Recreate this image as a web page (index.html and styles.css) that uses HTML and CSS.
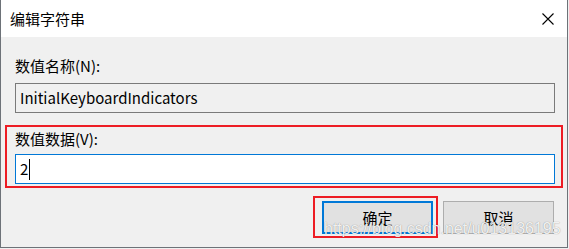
FILE: index.html
```html
<!DOCTYPE html>
<html lang="zh-CN">
<head>
    <meta charset="UTF-8">
    <meta name="viewport" content="width=device-width, initial-scale=1.0">
    <title>编辑字符串</title>
    <link rel="stylesheet" href="styles.css">
</head>
<body>
    <div class="dialog">
        <div class="titlebar">
            <span class="title">编辑字符串</span>
            <svg class="close" width="12" height="12" viewBox="0 0 12 12">
                <path d="M0.5 0.5 L11.5 11.5 M11.5 0.5 L0.5 11.5" stroke="#000" stroke-width="1.1" fill="none"/>
            </svg>
        </div>

        <div class="content">
            <div class="group">
                <div class="label">数值名称(N):</div>
                <div class="field readonly">InitialKeyboardIndicators</div>
            </div>

            <div class="group marked">
                <div class="label">数值数据(V):</div>
                <div class="field active">2<span class="caret"></span></div>
            </div>

            <div class="buttons">
                <div class="mark">
                    <div class="btn default">确定</div>
                </div>
                <div class="btn">取消</div>
            </div>
        </div>

        <div class="watermark">https://blog.csdn.net/u013136195</div>
    </div>
</body>
</html>
```

FILE: styles.css
```css
body {
    margin: 0;
    background-color: #f0f0f0;
    font-family: "Noto Sans CJK SC", "Noto Sans", sans-serif;
    font-size: 15px;
    color: #000;
}
.dialog {
    position: relative;
    width: 568px;
    height: 248px;
    box-sizing: border-box;
    border: 1px solid #6d7278;
    border-top: none;
    background-color: #f0f0f0;
}
.titlebar {
    height: 37px;
    background-color: #fff;
    display: flex;
    align-items: center;
    justify-content: space-between;
    padding: 0 13px 0 9px;
}
.title {
    line-height: 20px;
    margin-top: 1px;
}
.content {
    padding: 15px 4px 0 4px;
}
.group {
    border: 2px solid transparent;
    padding: 2px 6px 2px 8px;
    margin-bottom: 8px;
}
.group.marked {
    border-color: #ed1c24;
}
.label {
    line-height: 20px;
}
.group .label {
    margin-bottom: 7px;
}
.group.marked .label {
    margin-bottom: 5px;
}
.field {
    height: 30px;
    box-sizing: border-box;
    display: flex;
    align-items: center;
    padding-left: 4px;
    line-height: 20px;
}
.readonly {
    border: 1px solid #7a7a7a;
    background-color: #f0f0f0;
}
.active {
    border: 1px solid #0078d7;
    background-color: #fff;
}
.caret {
    display: inline-block;
    width: 1px;
    height: 21px;
    background-color: #000;
    margin-left: 1px;
}
.buttons {
    display: flex;
    justify-content: flex-end;
    align-items: center;
    padding-right: 9px;
}
.mark {
    border: 2px solid #ed1c24;
    padding: 3px 3px 2px 7px;
    margin-right: 5px;
}
.btn {
    width: 111px;
    height: 33px;
    box-sizing: border-box;
    border: 1px solid #adadad;
    background-color: #e1e1e1;
    display: flex;
    align-items: center;
    justify-content: center;
}
.btn.default {
    border: 2px solid #0078d7;
}
.watermark {
    position: absolute;
    left: 323px;
    top: 221px;
    font-family: "Liberation Sans", Arial, sans-serif;
    font-size: 16px;
    line-height: 15px;
    color: rgba(255, 255, 255, 0.9);
    text-shadow: 0 0 1px rgba(0, 0, 0, 0.45);
    white-space: nowrap;
}
```
